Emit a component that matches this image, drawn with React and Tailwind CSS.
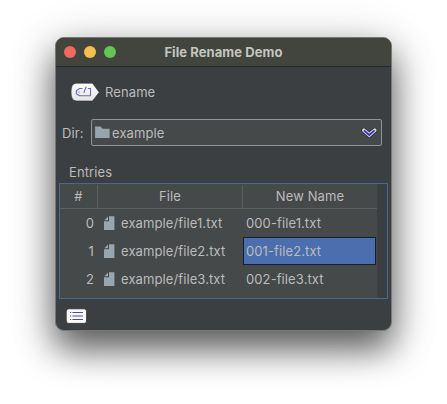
const entries = [
  { id: 0, file: "example/file1.txt", name: "000-file1.txt" },
  { id: 1, file: "example/file2.txt", name: "001-file2.txt", selected: true },
  { id: 2, file: "example/file3.txt", name: "002-file3.txt" },
];

function RenameIcon() {
  return (
    <svg className="h-[20px] w-[30px] shrink-0" viewBox="0 0 30 20" fill="none">
      <defs>
        <linearGradient id="tag" x1="0" y1="0" x2="0" y2="1">
          <stop offset="0" stopColor="#ffffff" />
          <stop offset="1" stopColor="#e4e4e4" />
        </linearGradient>
      </defs>
      <path d="M6 1.2H22.5L29.2 10.3L22.5 19H6Q1 18.5 1 10T6 1.2Z" fill="url(#tag)" stroke="#2b2d2f" strokeWidth="0.6" />
      <path d="M12.5 6.5H9.5L6.3 8.7V11.8L9.5 13.8H20.5V6.5H17.8M16.2 4.6L13.8 10.8" stroke="#6865cf" strokeWidth="1.1" />
      <circle cx="9" cy="10.2" r="0.9" stroke="#a19fe0" strokeWidth="0.6" />
    </svg>
  );
}

function FolderIcon() {
  return (
    <svg className="h-[13px] w-[15px] shrink-0" viewBox="0 0 15 13">
      <path d="M0.1 0.5H5.6L7.6 2.8H14.6V12H0.1Z" fill="#97a4ae" />
    </svg>
  );
}

function FileIcon() {
  return (
    <svg className="h-[15px] w-[11px] shrink-0" viewBox="0 0 11 15">
      <path d="M5 0.2H10.4V14H0V5.2H5Z" fill="#97a7b2" />
      <path d="M4 0.4V4.2H0.3Z" fill="#97a7b2" />
    </svg>
  );
}

function ChevronIcon() {
  return (
    <svg className="h-[12px] w-[16px] shrink-0" viewBox="0 0 16 12" fill="none">
      <path d="M3 3.3L8.3 8L13.6 3.3" stroke="#202224" strokeWidth="5" strokeLinecap="round" />
      <path d="M3 3.3L8.3 8L13.6 3.3" stroke="#d6d6de" strokeWidth="3.8" strokeLinecap="round" />
      <path d="M3 3.3L8.3 8L13.6 3.3" stroke="#392fc4" strokeWidth="1.7" />
    </svg>
  );
}

function ListIcon() {
  return (
    <svg className="h-[16px] w-[22px]" viewBox="0 0 22 16">
      <rect x="0.2" y="0.8" width="20.4" height="14.6" rx="2.5" fill="#fafafa" stroke="#222426" strokeWidth="0.8" />
      <path d="M6.4 4.5H17M6.4 8H17M6.4 11.5H17" stroke="#4b45c8" strokeWidth="1.1" />
      <path d="M4 4.5H5.2M4 8H5.2M4 11.5H5.2" stroke="#4b45c8" strokeWidth="1.1" />
    </svg>
  );
}

export default function App() {
  return (
    <div className="h-[404px] w-[447px] overflow-hidden bg-white pt-[37px] pl-[55px] font-['Inter','Liberation_Sans',sans-serif] text-[13px] leading-[16px] tracking-[0.1px] text-[#bbbbbb]">
      <div className="flex h-[294px] w-[337px] flex-col overflow-hidden rounded-[9px] border border-[#777977] bg-[#3c3f41] shadow-[0_18px_34px_rgba(0,0,0,0.58),0_8px_50px_rgba(0,0,0,0.2)]">
        <div className="grid h-[29px] shrink-0 grid-cols-[1fr_auto_1fr] items-center border-b border-[#262727] bg-[#42443e]">
          <div className="flex gap-[8px] pl-[8px]">
            <span className="size-[12px] rounded-full bg-[#ed6a5f]" />
            <span className="size-[12px] rounded-full bg-[#f5bf4f]" />
            <span className="size-[12px] rounded-full bg-[#62c554]" />
          </div>
          <span className="pb-px font-bold tracking-[0.08px] text-[#c4c5c1]">File Rename Demo</span>
        </div>

        <div className="mt-[15px] flex h-[20px] shrink-0 items-center gap-[5px] pl-[14px]">
          <RenameIcon />
          <span>Rename</span>
        </div>

        <div className="mt-[17px] flex h-[27px] shrink-0 items-center pr-[9px] pl-[6px]">
          <span className="w-[29px] pt-px">Dir:</span>
          <div className="flex h-full flex-1 items-center rounded-[2px] border border-[#929494] bg-[#45494a] pr-[4px] pl-[3px]">
            <FolderIcon />
            <span className="ml-[2px] flex-1 pt-px">example</span>
            <ChevronIcon />
          </div>
        </div>

        <div className="mt-[18px] h-[18px] shrink-0 pl-[13px]">Entries</div>

        <div className="mt-px ml-[3px] flex h-[116px] w-[329px] shrink-0 border border-[#466a92]">
          <div className="flex w-[317px] flex-col bg-[#45494a]">
            <div className="grid h-[25px] shrink-0 grid-cols-[38px_145px_134px] border-b border-[#5d6061] pt-px text-center leading-[23px]">
              <span className="mb-px border-r border-[#5d6061]">#</span>
              <span className="mb-px border-r border-[#5d6061]">File</span>
              <span>New Name</span>
            </div>
            {entries.map((entry) => (
              <div key={entry.id} className="grid h-[28px] shrink-0 grid-cols-[38px_145px_133px] items-center">
                <span className="pr-[4px] text-right">{entry.id}</span>
                <div className="flex items-center gap-[6px] pl-[6px]">
                  <FileIcon />
                  <span>{entry.file}</span>
                </div>
                <div className={entry.selected ? "flex h-[28px] items-center border border-[#151e30] bg-[#4b6eaf] pl-[2px]" : "pl-[3px]"}>
                  {entry.name}
                </div>
              </div>
            ))}
          </div>
        </div>

        <div className="mt-[9px] pl-[10px]">
          <ListIcon />
        </div>
      </div>
    </div>
  );
}
